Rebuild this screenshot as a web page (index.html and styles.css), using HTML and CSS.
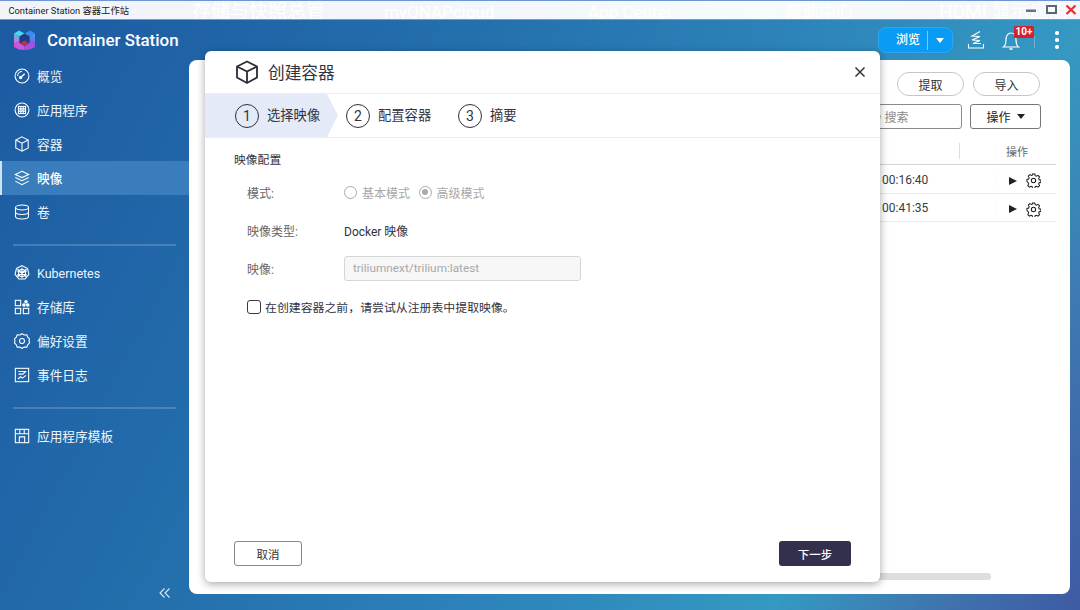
FILE: index.html
```html
<!DOCTYPE html>
<html lang="zh-CN">
<head>
<meta charset="utf-8">
<title>Container Station</title>
<link rel="stylesheet" href="styles.css">
</head>
<body>
<div class="window">
  <div class="titlebar">
    <span class="win-title">Container Station 容器工作站</span>
    <div class="ghosts">
      <span class="g1">存储与快照总管</span><span class="g2">myQNAPcloud</span><span class="g3">App Center</span><span class="g4">帮助中心</span><span class="g5">HDMI 显示应用</span>
    </div>
    <div class="win-controls">
      <svg width="14" height="14" viewBox="0 0 14 14"><rect x="2" y="7.500" width="10" height="2.500" fill="#66727f"/></svg>
      <svg width="14" height="14" viewBox="0 0 14 14"><rect x="3" y="4" width="9" height="7" fill="none" stroke="#5d6772" stroke-width="2"/></svg>
      <svg width="14" height="14" viewBox="0 0 14 14"><path d="M2.500 3.500l9 8.500M11.500 3.500l-9 8.500" stroke="#e8332f" stroke-width="2.400"/></svg>
    </div>
  </div>
  <div class="app">
    <header class="app-header">
      <div class="brand">
        <svg class="logo" width="21" height="20" viewBox="0 0 21 20">
          <defs>
            <linearGradient id="lg-left" x1="0" y1="0" x2="0" y2="1"><stop offset="0" stop-color="#40c8f4"/><stop offset="1" stop-color="#f25cc4"/></linearGradient>
            <linearGradient id="lg-right" x1="0" y1="0" x2="0" y2="1"><stop offset="0" stop-color="#3aa0f4"/><stop offset="1" stop-color="#7a62e6"/></linearGradient>
          </defs>
          <path d="M0 3.500L5 .5l5.500 3-5 3z" fill="#45dcf2"/>
          <path d="M10.500 3.500L16 .5l5 3-5.500 3z" fill="#3a8cf0"/>
          <path d="M0 3.500l5.500 3V11L0 14z" fill="url(#lg-left)"/>
          <path d="M21 3.500l-5.500 3V11l5.500 3z" fill="url(#lg-right)"/>
          <path d="M0 14l5.500-3 5 3v6L5 19.500 0 17z" fill="#cc55dc"/>
          <path d="M21 14l-5.500-3-5 3v6l5.500-.5 5-2.500z" fill="#a651e0"/>
          <path d="M5.500 6.500l5-3 5 3V13l-5 3-5-3z" fill="#1d3f84"/>
          <path d="M6.500 13l4-2.500 4 2.500-4 3z" fill="#c2304c"/>
        </svg>
        <span class="brand-name">Container Station</span>
      </div>
      <div class="header-actions">
        <div class="browse"><span class="browse-label">浏览</span><span class="browse-caret"></span></div>
        <svg class="hicon" width="18" height="20" viewBox="0 0 18 20" fill="none" stroke="#fff" stroke-width="1.100"><path d="M13 1.500L5 6l8 .5M13 6.500L5 10l8 .5M13 10.500L6 13.500h8M1.500 14v4h15v-4"/></svg>
        <div class="bell">
          <svg width="20" height="22" viewBox="0 0 20 22" fill="none" stroke="#fff" stroke-width="1.200"><path d="M2.500 18c2-1.500 2.500-4 2.500-7.500C5 6.500 7.200 4 10 4s5 2.500 5 6.500c0 3.500.5 6 2.500 7.500z"/><path d="M8.500 20h3" stroke-width="1.600"/></svg>
          <span class="badge">10+</span>
          <span class="bell-sep"></span>
        </div>
        <span class="kebab"><i></i><i></i><i></i></span>
      </div>
    </header>
    <div class="app-body">
      <nav class="sidebar">
        <ul class="nav-group">
          <li class="nav-item"><svg viewBox="0 0 18 18"><circle cx="9" cy="9" r="7.800"/><path d="M7 11.200L12 6.500" stroke-width="1.600"/><circle cx="7.500" cy="10.700" r="1.300" fill="#fff"/><path d="M4 9a5 5 0 0 1 5-5"/></svg>概览</li>
          <li class="nav-item"><svg viewBox="0 0 18 18"><circle cx="9" cy="9" r="7.800"/><rect x="5" y="5" width="8" height="8"/><path d="M5 7.700h8M5 10.300h8M7.700 5v8M10.300 5v8"/></svg>应用程序</li>
          <li class="nav-item"><svg viewBox="0 0 18 18"><path d="M9 1l7 3.500v9L9 17l-7-3.500v-9z"/><path d="M2 4.500L9 8l7-3.500M9 8v9"/></svg>容器</li>
          <li class="nav-item active"><svg viewBox="0 0 18 18"><path d="M9 1.500l7.500 3.500L9 8.500 1.500 5z"/><path d="M1.500 8.500L9 12l7.500-3.500M1.500 12.500L9 16.500l7.500-4"/></svg>映像</li>
          <li class="nav-item"><svg viewBox="0 0 18 18"><ellipse cx="9" cy="4" rx="7.300" ry="2.800"/><path d="M1.700 4v10c0 1.600 3 2.800 7.300 2.800s7.300-1.200 7.300-2.800V4M1.700 9c0 1.600 3 2.800 7.300 2.800s7.300-1.200 7.300-2.800"/></svg>卷</li>
        </ul>
        <ul class="nav-group">
          <li class="nav-item"><svg viewBox="0 0 18 18"><path d="M9 .8l6.200 3 1.600 6.700-4.300 5.300H5.500L1.200 10.500l1.600-6.700z"/><circle cx="9" cy="9" r="4"/><path d="M9 3v12M3.500 6.500l11 5M14.500 6.500l-11 5M4 13.500l10-9M14 13.500l-10-9"/></svg><span class="latin">Kubernetes</span></li>
          <li class="nav-item"><svg viewBox="0 0 18 18"><rect x="1.500" y="1.500" width="6" height="6"/><rect x="1.500" y="10.500" width="6" height="6"/><rect x="10.500" y="10.500" width="6" height="6"/><circle cx="13.500" cy="3" r="1.400" fill="#fff"/><circle cx="11.200" cy="6.800" r="1.400" fill="#fff"/><circle cx="15.500" cy="6.800" r="1.400" fill="#fff"/></svg>存储库</li>
          <li class="nav-item"><svg viewBox="0 0 18 18"><path d="M9 .8l2.500 1.500 2.900-.2 1 2.700 2.200 2L16.800 9l.8 2.200-2.200 2-1 2.700-2.900-.2L9 17.200l-2.500-1.500-2.900.2-1-2.700-2.200-2L1.200 9 .4 6.800l2.200-2 1-2.700 2.900.2z"/><circle cx="9" cy="9" r="2.800"/></svg>偏好设置</li>
          <li class="nav-item"><svg viewBox="0 0 18 18"><rect x="1.500" y="1.500" width="15" height="15"/><path d="M5 5h8l-3 3H5M4.500 13.500l3-2.500 2 1.500 4-3"/></svg>事件日志</li>
        </ul>
        <ul class="nav-group last">
          <li class="nav-item"><svg viewBox="0 0 18 18"><rect x="1.500" y="1.500" width="15" height="15"/><path d="M1.500 6.500h15M6.500 1.500v5M11.500 1.500v5M6 16.500v-6.500h6v6.500"/></svg>应用程序模板</li>
        </ul>
        <svg class="collapse" width="11" height="10" viewBox="0 0 11 10" fill="none" stroke="#dcebf7" stroke-width="1.100"><path d="M5.500 .5L1 5l4.500 4.500M10.500 .5L6 5l4.500 4.500"/></svg>
      </nav>
      <main class="panel">
        <div class="panel-top">
          <button class="pill">提取</button>
          <button class="pill">导入</button>
        </div>
        <div class="panel-tools">
          <div class="search"><svg width="12" height="12" viewBox="0 0 12 12" fill="none" stroke="#8a8a8a" stroke-width="1.200"><circle cx="5.500" cy="5.500" r="4.500"/></svg><span>搜索</span></div>
          <button class="ops">操作<i class="caret"></i></button>
        </div>
        <div class="table">
          <div class="row head"><span class="time"></span><span class="sep"></span><span class="act">操作</span></div>
          <div class="row"><span class="time">00:16:40</span><span class="act"><i class="play"></i><svg class="gear" viewBox="0 0 16 16" width="15" height="15"><path d="M6.800 1h2.400l.4 1.900 1.300.6 1.700-1 1.700 1.700-1 1.700.5 1.300 1.900.4v2.400l-1.900.4-.5 1.300 1 1.700-1.700 1.700-1.700-1-1.300.5-.4 1.900H6.800l-.4-1.900-1.300-.5-1.700 1-1.700-1.700 1-1.700-.5-1.300L.8 9.200V6.800l1.900-.4.500-1.300-1-1.700 1.700-1.700 1.700 1 1.300-.6z" transform="translate(.2 0)" fill="none" stroke="#222" stroke-width="1.100"/><circle cx="8" cy="8" r="2.300" fill="none" stroke="#222" stroke-width="1.100"/></svg></span></div>
          <div class="row"><span class="time">00:41:35</span><span class="act"><i class="play"></i><svg class="gear" viewBox="0 0 16 16" width="15" height="15"><path d="M6.800 1h2.400l.4 1.900 1.300.6 1.700-1 1.700 1.700-1 1.700.5 1.300 1.900.4v2.400l-1.900.4-.5 1.300 1 1.700-1.700 1.700-1.700-1-1.300.5-.4 1.900H6.800l-.4-1.900-1.300-.5-1.700 1-1.700-1.700 1-1.700-.5-1.300L.8 9.200V6.800l1.900-.4.500-1.300-1-1.700 1.700-1.700 1.700 1 1.300-.6z" transform="translate(.2 0)" fill="none" stroke="#222" stroke-width="1.100"/><circle cx="8" cy="8" r="2.300" fill="none" stroke="#222" stroke-width="1.100"/></svg></span></div>
        </div>
        <div class="hscroll"></div>
      </main>
    </div>
    <section class="modal">
      <div class="modal-head">
        <svg width="24" height="24" viewBox="0 0 24 24" fill="none" stroke="#2b2b35" stroke-width="1.800"><path d="M12 1.500l10 5v11l-10 5.500-10-5.500v-11z" stroke-linejoin="round"/><path d="M2 6.500l10 5 10-5M12 11.500V23"/></svg>
        <h2>创建容器</h2>
        <svg class="close" width="12" height="12" viewBox="0 0 12 12" fill="none" stroke="#33333d" stroke-width="1.500"><path d="M1.500 1.500l9 9M10.500 1.500l-9 9"/></svg>
      </div>
      <div class="steps">
        <div class="step current"><span class="num">1</span>选择映像</div>
        <div class="step"><span class="num">2</span>配置容器</div>
        <div class="step"><span class="num">3</span>摘要</div>
      </div>
      <div class="modal-body">
        <h3>映像配置</h3>
        <div class="field"><label>模式:</label><div class="radios"><span class="radio"><i></i>基本模式</span><span class="radio on"><i></i>高级模式</span></div></div>
        <div class="field"><label>映像类型:</label><span class="value">Docker 映像</span></div>
        <div class="field"><label>映像:</label><div class="input">triliumnext/trilium:latest</div></div>
        <div class="check"><i></i>在创建容器之前，请尝试从注册表中提取映像。</div>
      </div>
      <div class="modal-foot">
        <button class="btn">取消</button>
        <button class="btn primary">下一步</button>
      </div>
    </section>
  </div>
</div>
</body>
</html>
```
FILE: styles.css
```css
* { box-sizing: border-box; }
html, body { margin: 0; padding: 0; }
body { font-family: Roboto, "Noto Sans CJK SC", sans-serif; width: 1080px; height: 610px; overflow: hidden; color: #333; }
button { font: inherit; background: none; cursor: default; }
ul { list-style: none; margin: 0; padding: 0; }
.window { width: 1080px; height: 610px; display: flex; flex-direction: column; }

.titlebar { height: 20px; flex: none; display: flex; align-items: center; position: relative; border-top: 1px solid #6f94d6; background: linear-gradient(90deg, #f2f4f8, #f2f6fd 40%, #f6fbfe 70%, #f3f6fd); border-bottom: 1px solid #7a9cc4; padding-left: 8.500px; overflow: hidden; }
.win-title { font-size: 9.300px; color: #222; white-space: nowrap; width: 183.500px; flex: none; }
.ghosts { display: flex; font-size: 19px; color: #fff; white-space: nowrap; line-height: 22px; margin-top: 4px; }
.g1 { width: 192px; }
.g2 { width: 204px; font-size: 17px; }
.g3 { width: 197px; font-size: 17px; }
.g4 { width: 154px; font-size: 17px; }
.g5 { font-size: 19px; }
.win-controls { position: absolute; right: 2px; top: 1px; display: flex; gap: 6px; }

.app { flex: 1; position: relative; display: flex; flex-direction: column; background: linear-gradient(118deg, #1c5aa2 0%, #2470ad 35%, #2e86bb 60%, #3599c2 78%, #3f74ae 90%, #3e5aa3 100%); }
.app-header { height: 40px; flex: none; display: flex; align-items: center; justify-content: space-between; padding: 0 19px 0 14px; }
.brand { display: flex; align-items: center; gap: 12px; }
.brand-name { color: #fff; font-size: 16.900px; font-weight: 500; }
.logo { display: block; }
.header-actions { display: flex; align-items: center; }
.browse { width: 75px; height: 26px; border-radius: 8px; background: #0a9cf4; border: 1px solid #2aa8f2; display: flex; align-items: center; color: #fff; font-size: 12px; font-weight: 500; margin-right: 14px; }
.browse-label { width: 49px; text-align: right; padding-right: 7px; border-right: 1px solid #7ccaf7; line-height: 19px; flex: none; }
.browse-caret { width: 0; height: 0; border: 4px solid transparent; border-top: 5px solid #fff; border-bottom: 0; margin-left: 8px; }
.hicon { margin-right: 16px; display: block; }
.bell { position: relative; width: 20px; height: 22px; margin-right: 32px; }
.bell svg { display: block; }
.badge { position: absolute; left: 13px; top: -3px; width: 20px; text-align: center; background: #d6212b; color: #fff; font-size: 10px; font-weight: 700; line-height: 12px; border-radius: 1.500px; white-space: nowrap; }
.bell-sep { position: absolute; left: 33px; top: 7px; width: 1px; height: 12px; background: rgba(255,255,255,.3); }
.kebab { display: flex; flex-direction: column; gap: 3.500px; width: 8px; align-items: center; }
.kebab i { width: 3.500px; height: 3.500px; background: #fff; border-radius: 50%; display: block; }

.app-body { flex: 1; display: flex; min-height: 0; }
.sidebar { width: 189px; flex: none; position: relative; }
.nav-group:first-child { margin-top: -1px; }
.nav-group::after { content: ""; display: block; height: 2px; background: rgba(255,255,255,.18); margin: 15px 13px 10px; width: 163px; }
.nav-group.last::after { display: none; }
.nav-item { height: 34px; display: flex; align-items: center; gap: 7px; padding: 0 0 2px 14px; color: #eef5fb; font-size: 12.700px; white-space: nowrap; }
.nav-item svg { width: 16px; height: 16px; flex: none; fill: none; stroke: #fff; stroke-width: 1.200; margin-top: 2px; }
.nav-item.active { background: #3a7dbd; border-left: 2px solid #cfe3f3; padding-left: 12px; color: #fff; font-weight: 500; }
.latin { font-size: 12.500px; margin-top: 2px; }
.collapse { position: absolute; left: 159px; top: 528px; }

.panel { width: 881px; height: 534px; background: #fff; border-radius: 8px; flex: none; position: relative; overflow: hidden; display: flex; flex-direction: column; align-items: flex-end; padding: 12px 14px 0 0; }
.panel-top { display: flex; gap: 9px; padding-right: 16px; }
.pill { width: 67px; height: 24px; border: 1px solid #c6c6c6; border-radius: 12px; font-size: 12px; color: #333; padding: 0; }
.panel-tools { display: flex; gap: 8.500px; margin-top: 8px; padding-right: 15px; }
.search { width: 100px; height: 25px; border: 1px solid #8a8a8a; border-radius: 3px; font-size: 12px; color: #8a8a8a; padding-left: 7px; display: flex; align-items: center; gap: 3px; }
.ops { width: 71px; height: 25px; border: 1px solid #777; border-radius: 3px; font-size: 12px; color: #222; padding: 0; display: flex; align-items: center; justify-content: center; gap: 6px; }
.caret { width: 0; height: 0; border: 4px solid transparent; border-top: 5px solid #222; border-bottom: 0; display: block; }
.table { width: 178px; margin-top: 9px; font-size: 12px; }
.row { height: 28.500px; display: flex; align-items: center; border-bottom: 1px solid #ececec; padding-top: 2px; }
.row.head { height: 27px; border-bottom: 1px solid #d5d5d5; color: #666; font-size: 11px; padding-top: 0; }
.time { width: 120px; padding-left: 4px; color: #3a3a3a; font-size: 12px; flex: none; }
.head .time { width: 81px; }
.sep { width: 1px; height: 16px; background: #ddd; flex: none; margin-right: 38px; }
.act { width: 58px; height: 100%; flex: none; display: flex; align-items: center; padding: 2px 0 0 9px; background: #fff; box-shadow: -8px 0 8px -8px rgba(0,0,0,.05); }
.head .act { padding: 0 0 0 8px; }
.play { width: 0; height: 0; border-left: 8px solid #222; border-top: 4.500px solid transparent; border-bottom: 4.500px solid transparent; display: block; margin-left: 2px; margin-right: 9px; }
.gear { display: block; }
.hscroll { position: absolute; left: 680px; top: 513px; width: 122px; height: 7px; background: #dedede; border-radius: 3px; }

.modal { position: absolute; left: 205px; top: 31px; width: 675px; height: 531px; background: #fff; border-radius: 6px; box-shadow: 0 2px 8px rgba(0,0,0,.35); display: flex; flex-direction: column; }
.modal-head { height: 43px; flex: none; display: flex; align-items: center; padding: 0 14px 1px 30px; border-bottom: 1px solid #eee; gap: 9px; }
.modal-head h2 { margin: 0; font-size: 16.700px; font-weight: 400; color: #33333f; flex: 1; }
.steps { height: 44px; flex: none; display: flex; border-bottom: 1px solid #eee; }
.step { display: flex; align-items: center; gap: 8px; font-size: 13.300px; color: #33333f; width: 112px; padding: 0 0 2px 8px; white-space: nowrap; flex: none; }
.step.current { width: 133px; padding-left: 30px; clip-path: polygon(0 0, 122px 0, 133px 50%, 122px 100%, 0 100%); background: #e4eaf8; }
.num { width: 24px; height: 24px; border: 1.500px solid #2f2f38; border-radius: 50%; display: flex; align-items: center; justify-content: center; font-size: 14px; flex: none; margin-top: 2px; }
.modal-body { flex: 1; padding: 15px 30px 0 29px; }
h3 { margin: 0; font-size: 11.800px; font-weight: 400; color: #33333f; line-height: 14px; }
.field { display: flex; align-items: center; height: 26px; margin-top: 12px; font-size: 12px; padding-left: 13px; }
.label-gap { margin-top: 12px; }
.field label { width: 97px; color: #666; flex: none; }
.value { color: #33333f; }
.radios { display: flex; gap: 8.500px; color: #a8a8a8; }
.radio { display: flex; align-items: center; gap: 5px; }
.radio i { width: 13px; height: 13px; border: 1px solid #aaa; border-radius: 50%; display: block; position: relative; }
.radio.on i::after { content: ""; position: absolute; inset: 2.500px; background: #aaa; border-radius: 50%; }
.input { width: 237px; height: 25px; background: #f7f7f7; border: 1px solid #d6d6d6; border-radius: 3px; color: #a8a8a8; font-size: 11.800px; padding-left: 8px; line-height: 23px; }
.check { display: flex; align-items: center; gap: 4px; font-size: 11.900px; color: #33333f; margin-top: 17px; padding-left: 13px; }
.check i { width: 14px; height: 14px; border: 1.500px solid #3a3a44; border-radius: 3px; display: block; flex: none; }
.modal-foot { display: flex; justify-content: space-between; padding: 0 29px 16px; }
.btn { width: 68px; height: 25px; border: 1px solid #888; border-radius: 3px; font-size: 11.500px; color: #333; padding: 0; }
.btn.primary { width: 72px; background: #33304e; border: 0; color: #fff; font-weight: 500; }
```
